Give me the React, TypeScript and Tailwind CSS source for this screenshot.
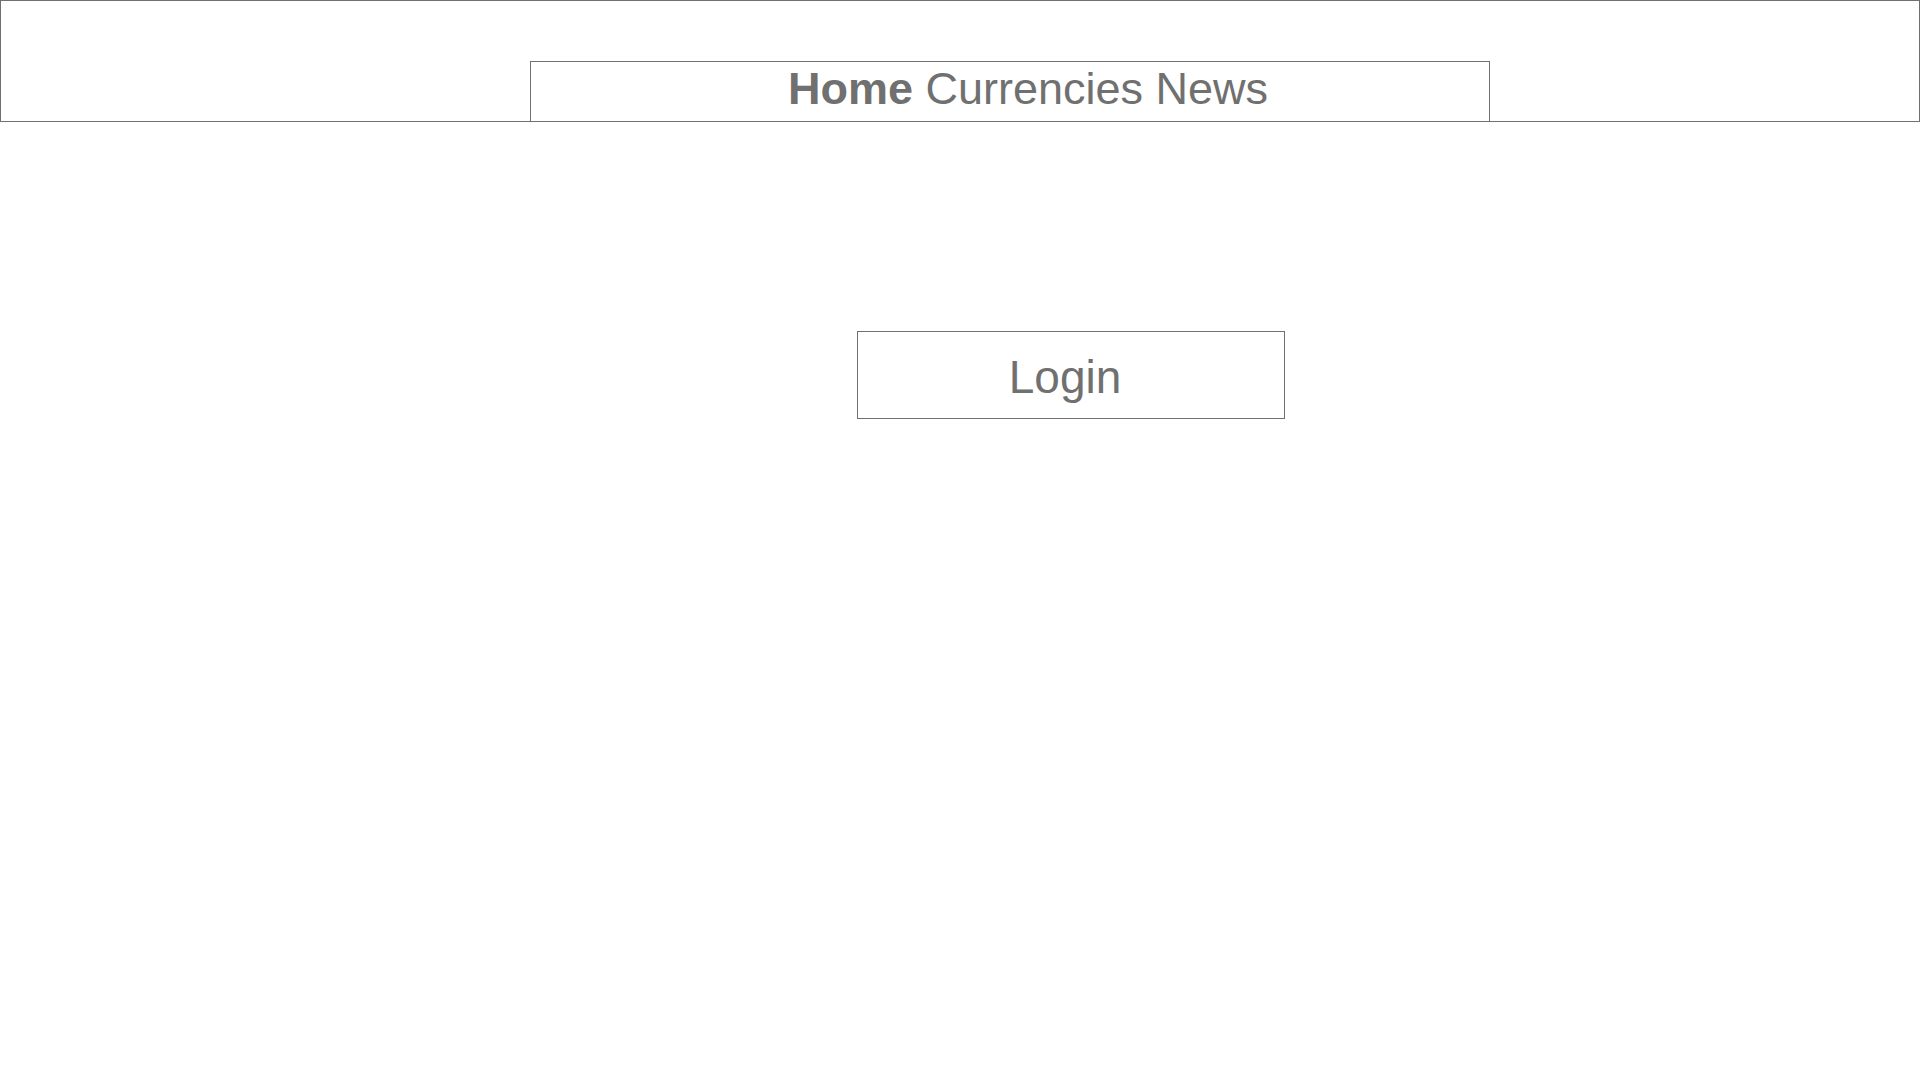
export default function App() {
  return (
    <div className="min-h-screen w-full bg-white text-[#707070] font-['Liberation_Sans',Arial,sans-serif]">
      {/* header */}
      <header className="h-[122px] w-full border border-[#707070] pt-[60px] pl-[529px]">
        <nav className="h-[60px] w-[960px] border-x border-t border-[#707070] pt-[4px] pl-[36px] text-center text-[45px] leading-none">
          <a href="#" className="font-bold">Home</a> <a href="#">Currencies</a> <a href="#">News</a>
        </nav>
      </header>

      {/* login */}
      <main className="pt-[209px] pl-[857px]">
        <button className="block h-[88px] w-[428px] border border-[#707070] pt-[4px] pr-[12px] text-center text-[46px] leading-none text-[#707070]">
          Login
        </button>
      </main>
    </div>
  );
}
